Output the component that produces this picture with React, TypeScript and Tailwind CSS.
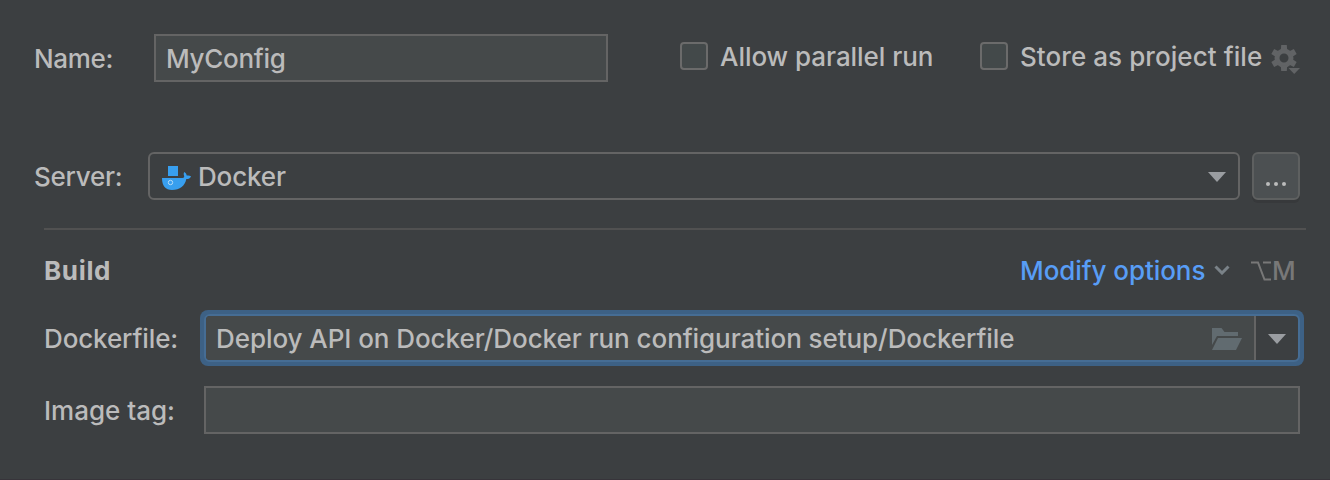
import type { ReactNode } from 'react';

function Label({ className, children }: { className: string; children: ReactNode }) {
  return <span className={`shrink-0 whitespace-pre leading-8 ${className}`}>{children}</span>;
}

function Checkbox() {
  return <span className="size-7 shrink-0 rounded-[4px] border-2 border-[#6b6b6b] bg-[#43494a]" />;
}

function Triangle() {
  return (
    <svg className="h-[10px] w-[18px] shrink-0" viewBox="0 0 18 10">
      <path d="M0 0H18L9 10Z" fill="#9a9da1" />
    </svg>
  );
}

function GearIcon() {
  const tooth = 'M9.800 6.500 10.200 1h5.600l.4 5.500ZM9.800 21.500l.4 5.500h5.600l.4-5.500Z';
  return (
    <svg className="h-[30px] w-[30px] shrink-0" viewBox="0 0 30 30" fill="#616365">
      <circle cx="13" cy="14" r="7" fill="none" stroke="#616365" strokeWidth="5" />
      <path d={tooth} />
      <path d={tooth} transform="rotate(60 13 14)" />
      <path d={tooth} transform="rotate(120 13 14)" />
      <path d="M17.500 24H29L23.200 30Z" />
    </svg>
  );
}

function DockerIcon() {
  return (
    <svg className="h-6 w-[30px] shrink-0" viewBox="0 0 30 24">
      <path d="M6 0h10v10H6Z" fill="#389fef" />
      <path
        d="M0 12H20.500C22 12 22.600 11 22 9.500 21.500 8 21.700 7 22.300 6c1.500.9 2.200 2 2.400 3.600 1.600-.4 3-.2 4.400.8-.9 1.600-2.300 2.500-4.800 2.700C23 20 18 24 10 24 3.500 24 0 20 0 12Z"
        fill="#389fef"
      />
      <circle cx="8.500" cy="16.500" r="2.200" fill="none" stroke="#b5dcf9" strokeWidth="1" />
    </svg>
  );
}

function FolderIcon() {
  return (
    <svg className="h-[22px] w-[30px] shrink-0" viewBox="0 0 30 22">
      <path d="M0 0H9.500L12.500 4H26V8H5L0 17Z" fill="#616b70" />
      <path d="M6 10H30L24 22H0Z" fill="#616b70" />
    </svg>
  );
}

export default function App() {
  return (
    <main className="flex h-[480px] w-[1330px] flex-col border-b border-[#37343a] bg-[#3c3f41] pt-[34px] font-['Inter',sans-serif] text-[26px] font-[450] text-[#bbbbbb]">
      <div className="flex h-12 pl-[34px]">
        <Label className="w-[120px] pt-[9px] tracking-[-0.3px]">Name:</Label>
        <div className="flex w-[454px] items-center border-2 border-[#646464] bg-[#45494a] pl-[10px]">
          <Label className="pt-[2px] tracking-[-0.3px]">MyConfig</Label>
        </div>
        <div className="ml-[72px] flex w-[300px] gap-3 pt-2">
          <Checkbox />
          <Label className="-mt-px tracking-[-0.05px]">Allow parallel run</Label>
        </div>
        <div className="flex pt-2">
          <Checkbox />
          <Label className="-mt-px ml-3 w-[251px] tracking-[0.07px]">Store as project file</Label>
          <div className="pt-[2px]">
            <GearIcon />
          </div>
        </div>
      </div>

      <div className="mt-[70px] flex h-12 pl-[34px]">
        <Label className="w-[114px] pt-[9px] tracking-[-0.25px]">Server:</Label>
        <div className="flex w-[1092px] items-center rounded-[6px] border-2 border-[#646464] pr-3 pl-3">
          <div className="pt-1">
            <DockerIcon />
          </div>
          <Label className="ml-1.5 grow pt-[2px] tracking-[-0.15px]">Docker</Label>
          <div className="pt-[2px]">
            <Triangle />
          </div>
        </div>
        <button className="ml-3 flex w-12 items-end justify-center gap-1 rounded-[6px] border-2 border-[#5e6060] bg-[#4c5052] pb-3 shadow-[0_3px_0_#37393b]">
          <span className="size-1 rounded-full bg-[#bbbbbb]" />
          <span className="size-1 rounded-full bg-[#bbbbbb]" />
          <span className="size-1 rounded-full bg-[#bbbbbb]" />
        </button>
      </div>

      <hr className="mt-7 mr-6 ml-11 border-t-2 border-[#515151]" />

      <div className="mt-[25px] flex h-8 items-center pl-11">
        <Label className="w-[976px] font-bold tracking-[0.65px]">Build</Label>
        <Label className="w-[194px] tracking-[-0.07px] text-[#589df6]">Modify options</Label>
        <svg className="mb-[2px] h-[10px] w-4" viewBox="0 0 16 10">
          <path d="M1.500 1.500 8 8l6.500-6.500" fill="none" stroke="#7a8288" strokeWidth="3" />
        </svg>
        <svg className="ml-5 h-5 w-[22px]" viewBox="0 0 22 20">
          <path d="M1 1.500H8L14.500 18.500H21M13 1.500h8" fill="none" stroke="#787878" strokeWidth="2" />
        </svg>
        <Label className="text-[#787878]">M</Label>
      </div>

      <div className="mt-[23px] flex h-14 pl-11">
        <Label className="w-[156px] pt-[13px] tracking-[-0.12px]">Dockerfile:</Label>
        <div className="w-[1104px] rounded-[8px] bg-[#3d6185] p-1">
          <div className="flex h-12 rounded-[6px] border-2 border-[#466d94] bg-[#3c3f41]">
            <div className="flex w-[1050px] items-center rounded-l-[4px] border-r-2 border-[#646464] bg-[#45494a] pr-3 pl-[10px]">
              <Label className="grow pt-[2px] tracking-[-0.065px]">
                Deploy API on Docker/Docker run configuration setup/Dockerfile
              </Label>
              <div className="pt-[2px]">
                <FolderIcon />
              </div>
            </div>
            <div className="flex grow items-center justify-center pt-[2px]">
              <Triangle />
            </div>
          </div>
        </div>
      </div>

      <div className="mt-5 flex h-12 pl-11">
        <Label className="w-40 pt-[9px]">Image tag:</Label>
        <div className="w-[1096px] border-2 border-[#646464] bg-[#45494a]" />
      </div>
    </main>
  );
}
